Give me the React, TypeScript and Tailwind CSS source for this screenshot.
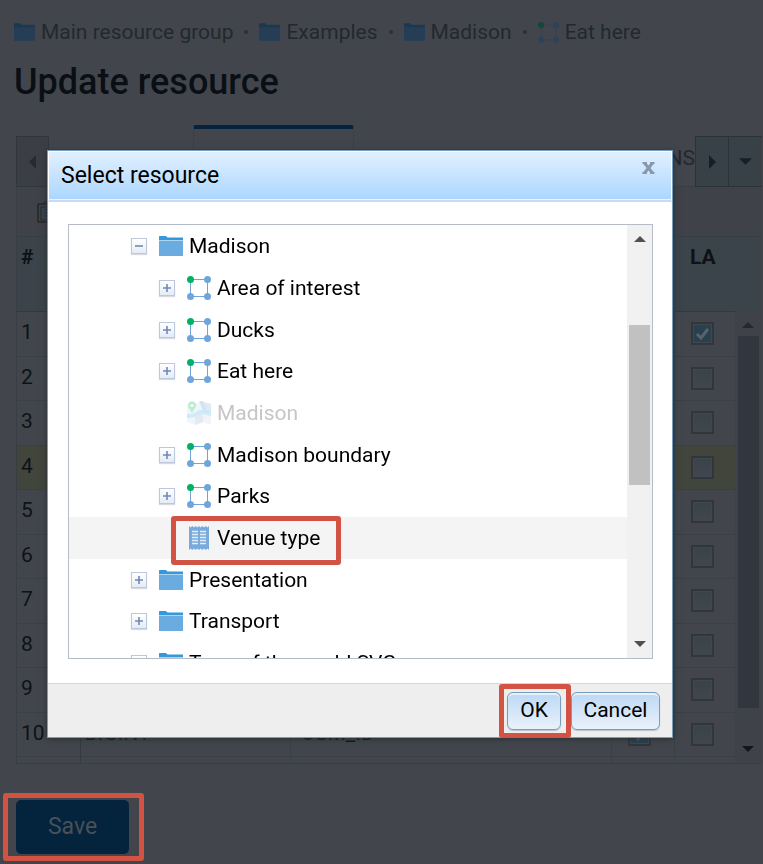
import type { ReactNode } from 'react';

type NodeKind = 'folder' | 'vector' | 'map' | 'lookup';

interface TreeNode {
  label: string;
  kind: NodeKind;
  level: 0 | 1;
  toggle?: 'plus' | 'minus';
  disabled?: boolean;
  selected?: boolean;
}

const nodes: TreeNode[] = [
  { label: 'Madison', kind: 'folder', level: 0, toggle: 'minus' },
  { label: 'Area of interest', kind: 'vector', level: 1, toggle: 'plus' },
  { label: 'Ducks', kind: 'vector', level: 1, toggle: 'plus' },
  { label: 'Eat here', kind: 'vector', level: 1, toggle: 'plus' },
  { label: 'Madison', kind: 'map', level: 1, disabled: true },
  { label: 'Madison boundary', kind: 'vector', level: 1, toggle: 'plus' },
  { label: 'Parks', kind: 'vector', level: 1, toggle: 'plus' },
  { label: 'Venue type', kind: 'lookup', level: 1, selected: true },
  { label: 'Presentation', kind: 'folder', level: 0, toggle: 'plus' },
  { label: 'Transport', kind: 'folder', level: 0, toggle: 'plus' },
  { label: 'Tops of the world SVG', kind: 'folder', level: 0, toggle: 'plus' },
];

const fields = [1, 2, 3, 4, 5, 6, 7, 8, 9, 10];

function FolderIcon({ className, tab = '#3498db', body = '#6aace0' }: { className: string; tab?: string; body?: string }) {
  return (
    <svg viewBox="0 0 24 20" className={className} aria-hidden="true">
      <path d="M0 0.5Q0 0 0.8 0H7L8.5 1.6H24V5H0Z" fill={tab} />
      <rect x="0" y="4" width="24" height="1" fill="#ffffff" opacity={tab === '#3498db' ? 0.6 : 0} />
      <path d="M0 5H24V20H0Z" fill={body} />
    </svg>
  );
}

function VectorIcon({ className, first = '#00b265', rest = '#6fa5da' }: { className: string; first?: string; rest?: string }) {
  return (
    <svg viewBox="0 0 24 24" className={className} aria-hidden="true">
      <rect x="3.5" y="3.5" width="17" height="17" fill="none" stroke={rest} strokeWidth="1" />
      <circle cx="3.5" cy="3.5" r="3.5" fill={first} />
      <circle cx="20.5" cy="3.5" r="3.5" fill={rest} />
      <circle cx="3.5" cy="20.5" r="3.5" fill={rest} />
      <circle cx="20.5" cy="20.5" r="3.5" fill={rest} />
    </svg>
  );
}

function MapIcon() {
  return (
    <svg viewBox="0 0 24 24" className="size-6" aria-hidden="true">
      <path d="M0 6L8 3L16 1L24 3V24L16 21L8 24L0 21Z" fill="#f1f5f9" />
      <path d="M11 1H16L20 8L24 10V3L16 1Z" fill="#dfeaf3" />
      <path d="M8 12L16 9V21L8 24Z" fill="#e4eaf1" />
      <path d="M0 13C6 13 9 12 12 9L24 9V15L16 13C10 14 8 17 0 17Z" fill="#cfeafa" />
      <path d="M12 0H16L21 11L17 12Z" fill="#cde5f5" />
      <path d="M5 0.5A4 4 0 0 1 9 4.5C9 7 6 9 5 12C4 9 1 7 1 4.5A4 4 0 0 1 5 0.5Z" fill="#b9ecd0" />
      <circle cx="5" cy="4.5" r="1.6" fill="#ffffff" />
    </svg>
  );
}

function LookupIcon() {
  return (
    <svg viewBox="0 0 24 24" className="size-6" aria-hidden="true">
      <path
        d="M2 0L3.5 1.5L5.3 0L7 1.5L8.7 0L10.3 1.5L12 0L13.7 1.5L15.3 0L17 1.5L18.7 0L20.5 1.5L22 0V24L20.5 22.5L18.7 24L17 22.5L15.3 24L13.7 22.5L12 24L10.3 22.5L8.7 24L7 22.5L5.3 24L3.5 22.5L2 24Z"
        fill="#78aadc"
      />
      <path
        d="M5 5.5H11M5 8.5H11M5 11.5H11M5 14.5H11M5 17.5H11M13 5.5H19M13 8.5H19M13 11.5H19M13 14.5H19M13 17.5H19"
        stroke="#e3edf7"
        strokeWidth="1.3"
      />
    </svg>
  );
}

function Arrow({ dir, className }: { dir: 'up' | 'down' | 'left' | 'right'; className: string }) {
  const d = {
    up: 'M0 9L6 3L12 9Z',
    down: 'M0 3L6 9L12 3Z',
    left: 'M9 -1L2 6L9 13Z',
    right: 'M3 -1L10 6L3 13Z',
  }[dir];
  return (
    <svg viewBox="0 0 12 12" className={`overflow-visible ${className}`} fill="currentColor" aria-hidden="true">
      <path d={d} />
    </svg>
  );
}

function Highlight({ className }: { className: string }) {
  return <span className={`pointer-events-none absolute z-10 rounded-[3px] border-[5px] border-[#d25344] ${className}`} />;
}

function Toggle({ kind, label }: { kind: 'plus' | 'minus'; label: string }) {
  return (
    <button
      type="button"
      aria-label={`Toggle ${label}`}
      className="mr-3 flex size-4 shrink-0 items-center justify-center border border-[#bcc8de] bg-linear-to-b from-white to-[#e6ebf4] shadow-[0_1px_1px_#d5dae3]"
    >
      <svg viewBox="0 0 8 8" className="size-2" stroke="#7089bb" strokeWidth="1.6" aria-hidden="true">
        <path d={kind === 'plus' ? 'M0 4H8M4 0V8' : 'M0 4H8'} />
      </svg>
    </button>
  );
}

function TreeRow({ node }: { node: TreeNode }) {
  return (
    <li
      className={`flex h-[42px] shrink-0 items-center nth-[3n]:h-[41px] ${node.level ? 'pl-[90px]' : 'pl-[62px]'} ${
        node.selected ? 'bg-[#f4f4f4]' : ''
      }`}
    >
      {node.toggle ? <Toggle kind={node.toggle} label={node.label} /> : <span className="mr-3 w-4 shrink-0" />}
      <span className="relative flex items-center gap-[6px]">
        {node.kind === 'folder' && <FolderIcon className="h-5 w-6" />}
        {node.kind === 'vector' && <VectorIcon className="size-6" />}
        {node.kind === 'map' && <MapIcon />}
        {node.kind === 'lookup' && <LookupIcon />}
        <span className={node.disabled ? 'text-[#c6c6c6]' : ''}>{node.label}</span>
        {node.selected && <Highlight className="-top-[10px] -right-[21px] -bottom-[15px] -left-4" />}
      </span>
    </li>
  );
}

function GridCheck({ label, checked }: { label: string; checked?: boolean }) {
  return (
    <span className="relative block size-[23px]">
      <input
        type="checkbox"
        aria-label={label}
        defaultChecked={checked}
        className="block size-[23px] appearance-none border-2 border-[#31363d] bg-linear-to-b from-[#39434a] to-[#42464d] shadow-[inset_0_0_0_1px_#42474e] checked:from-[#29414f] checked:to-[#29414f] checked:shadow-[inset_0_0_0_1px_#42474e]"
      />
      {checked && (
        <svg viewBox="0 0 23 23" className="absolute inset-0" fill="none" stroke="#596269" strokeWidth="3" aria-hidden="true">
          <path d="M6 12L10 16L17 7" />
        </svg>
      )}
    </span>
  );
}

function Crumb({ icon, children, last }: { icon: ReactNode; children: string; last?: boolean }) {
  return (
    <li className="flex items-center">
      <a href="#" className="flex items-center gap-[6px]">
        {icon}
        {children}
      </a>
      {!last && <span className="mx-[11px] size-1 rounded-full bg-[#2b3137]" />}
    </li>
  );
}

function Page() {
  const folder = <FolderIcon className="h-[18px] w-[21px]" tab="#1b3850" body="#253e55" />;
  return (
    <main className="flex flex-col">
      <nav aria-label="Breadcrumb" className="px-[14px] pt-5 text-[#22282f]">
        <ol className="flex h-6 items-center">
          <Crumb icon={folder}>Main resource group</Crumb>
          <Crumb icon={folder}>Examples</Crumb>
          <Crumb icon={folder}>Madison</Crumb>
          <Crumb icon={<VectorIcon className="size-[21px]" first="#12483a" rest="#2b4258" />} last>
            Eat here
          </Crumb>
        </ol>
      </nav>
      <h1 className="mt-4 px-[14px] text-[36px] leading-[44px] font-medium text-[#0a0f15]">Update resource</h1>

      <div className="mt-[21px] mr-px ml-4">
        <div className="flex h-[62px] items-end">
          <button type="button" aria-label="Scroll tabs left" className="flex h-[51px] w-[33px] items-center justify-center border border-[#31363d] bg-[#3b3e45] text-[#262b31]">
            <Arrow dir="left" className="size-3" />
          </button>
          <div className="ml-36 h-full w-[161px] rounded-t-[3px] border-x border-t-4 border-x-[#3b4046] border-t-[#04233f]" />
          <div className="flex h-[51px] flex-1 items-center justify-end overflow-hidden border-b border-[#383d43] pb-[6px] text-[#22282f]">
            <span>NS</span>
          </div>
          <button type="button" aria-label="Scroll tabs right" className="flex h-[51px] w-[34px] items-center justify-center border border-[#2b333a] bg-[#394148] text-[#13202c]">
            <Arrow dir="right" className="size-3" />
          </button>
          <button type="button" aria-label="Tab list" className="flex h-[51px] w-[33px] items-center justify-center border-y border-[#2b333a] bg-[#394148] text-[#13202c]">
            <Arrow dir="down" className="size-[13px]" />
          </button>
        </div>

        <div className="flex h-[49px] items-center border-l border-[#3b4046] bg-[#3f4248] pl-5">
          <svg viewBox="0 0 22 24" className="h-6 w-[22px]" aria-hidden="true">
            <path d="M5 4L8 1H14L17 4Z" fill="#26323d" />
            <rect x="1" y="4" width="20" height="18" rx="1" fill="none" stroke="#2e2b28" strokeWidth="2" />
            <path d="M4 7H18V20H4Z" fill="#3b444d" stroke="#1e2b3a" />
            <path d="M7 10H15M7 13H15M7 16H15" stroke="#262d35" />
          </svg>
        </div>

        <div className="relative border-y border-l border-[#393e44]">
          <table className="w-full table-fixed border-collapse text-[#0d1217]">
            <colgroup>
              <col className="w-[63px]" />
              <col className="w-[210px]" />
              <col />
              <col className="w-[63px]" />
              <col className="w-[63px]" />
              <col className="w-[25px]" />
            </colgroup>
            <thead>
              <tr className="h-[74px] border-b border-[#33393f] bg-[#3b444a] text-left align-top">
                <th className="pt-2 pl-1">#</th>
                <th />
                <th />
                <th />
                <th className="pt-2 pl-4">LA</th>
                <td />
              </tr>
            </thead>
            <tbody>
              {fields.map((n) => (
                <tr key={n} className="h-[45px] border-b border-[#3b4046] even:h-11 nth-[4]:bg-[#42453c]">
                  <td className="border-r border-[#353a40] pb-[3px] pl-1 align-middle">{n}</td>
                  <td className="border-r border-[#3b4046] pb-[3px] pl-1">{n === 10 ? 'BIGINT' : ''}</td>
                  <td className="border-r border-[#3b4046] pb-[3px] pl-[10px]">{n === 10 ? 'OSM_ID' : ''}</td>
                  <td className="border-r border-[#3b4046] pl-4">
                    <GridCheck label={`Feature attribute ${n}`} checked={n === 10} />
                  </td>
                  <td className="pl-4">
                    <GridCheck label={`Label attribute ${n}`} checked={n === 1} />
                  </td>
                  <td className="bg-[#42464c]" />
                </tr>
              ))}
              <tr className="h-[7px]">
                <td className="border-r border-[#353a40]" />
                <td className="border-r border-[#3b4046]" />
                <td className="border-r border-[#3b4046]" />
                <td className="border-r border-[#3b4046]" />
                <td />
                <td />
              </tr>
            </tbody>
          </table>
          <div className="absolute top-[74px] right-0 bottom-0 flex w-[27px] flex-col items-center bg-[#3f4349] py-2 pr-px">
            <Arrow dir="up" className="size-3 shrink-0 text-[#24292f]" />
            <div className="mt-[5px] mb-[35px] w-[21px] flex-1 bg-[#32363e]" />
            <Arrow dir="down" className="size-3 shrink-0 text-[#12171d]" />
          </div>
        </div>
      </div>

      <div className="relative mt-9 ml-4 self-start">
        <button type="button" className="h-[54px] w-[113px] rounded-[5px] bg-[#04233d] text-[23px] text-[#495057]">
          Save
        </button>
        <Highlight className="-top-[7px] -right-[15px] -bottom-[7px] -left-[13px]" />
      </div>
    </main>
  );
}

const dialogButton =
  'h-[38px] rounded-[6px] border border-[#769dc0] bg-linear-to-b from-[#bcd8f4] to-[#eaf2fb] pb-[2px] shadow-[inset_0_2px_0_#e8f1fa,0_1px_1px_#b9c2cc]';

function SelectDialog() {
  return (
    <div className="fixed inset-0 pt-[150px] pr-[90px] pl-[47px]">
      <div
        role="dialog"
        aria-labelledby="dialog-title"
        className="flex flex-col border border-[#759dc0] bg-white text-black shadow-[0_1px_6px_#2b2f35]"
      >
        <header className="flex h-[51px] items-start justify-between border border-b-2 border-white border-b-[#c9dcee] bg-linear-to-b from-[#e1f0ff] to-[#abd6ff] pr-4 pl-3 shadow-[inset_0_-1px_0_#eaf4ff]">
          <h2 id="dialog-title" className="self-center text-[23px] leading-7">
            Select resource
          </h2>
          <button type="button" aria-label="Close" className="mt-[10px]">
            <svg viewBox="0 0 13 12" className="h-3 w-[13px]" fill="none" stroke="#8799aa" aria-hidden="true">
              <path d="M2.5 1L10.5 11M10.5 1L2.5 11" strokeWidth="3" />
              <path d="M0.5 1H5M8 1H12.5M0.5 11H5M8 11H12.5" strokeWidth="2" />
            </svg>
          </button>
        </header>

        <div className="pt-[22px] pr-[19px] pb-6 pl-5">
          <div className="flex h-[435px] overflow-hidden border border-[#b5bcc7]">
            <ul className="flex flex-1 flex-col overflow-hidden">
              {nodes.map((node, i) => (
                <TreeRow key={i} node={node} />
              ))}
            </ul>
            <div className="flex w-[25px] flex-col items-center bg-[#f1f1f1] py-2 text-[#505050]">
              <Arrow dir="up" className="size-3" />
              <div className="mt-20 h-40 w-[21px] bg-[#c1c1c1]" />
              <Arrow dir="down" className="mt-auto size-3" />
            </div>
          </div>
        </div>

        <footer className="flex h-[54px] items-center justify-end gap-[10px] border-t border-[#d8d8d8] bg-[#eeeeee] px-3">
          <span className="relative">
            <button type="button" className={`w-[54px] ${dialogButton}`}>
              OK
            </button>
            <Highlight className="-inset-x-2 -inset-y-2 -right-[10px]" />
          </span>
          <button type="button" className={`w-[89px] ${dialogButton}`}>
            Cancel
          </button>
        </footer>
      </div>
    </div>
  );
}

export default function App() {
  return (
    <div className="min-h-screen bg-[#42464c] font-[Roboto,sans-serif] text-[21px] leading-6">
      <Page />
      <SelectDialog />
    </div>
  );
}
